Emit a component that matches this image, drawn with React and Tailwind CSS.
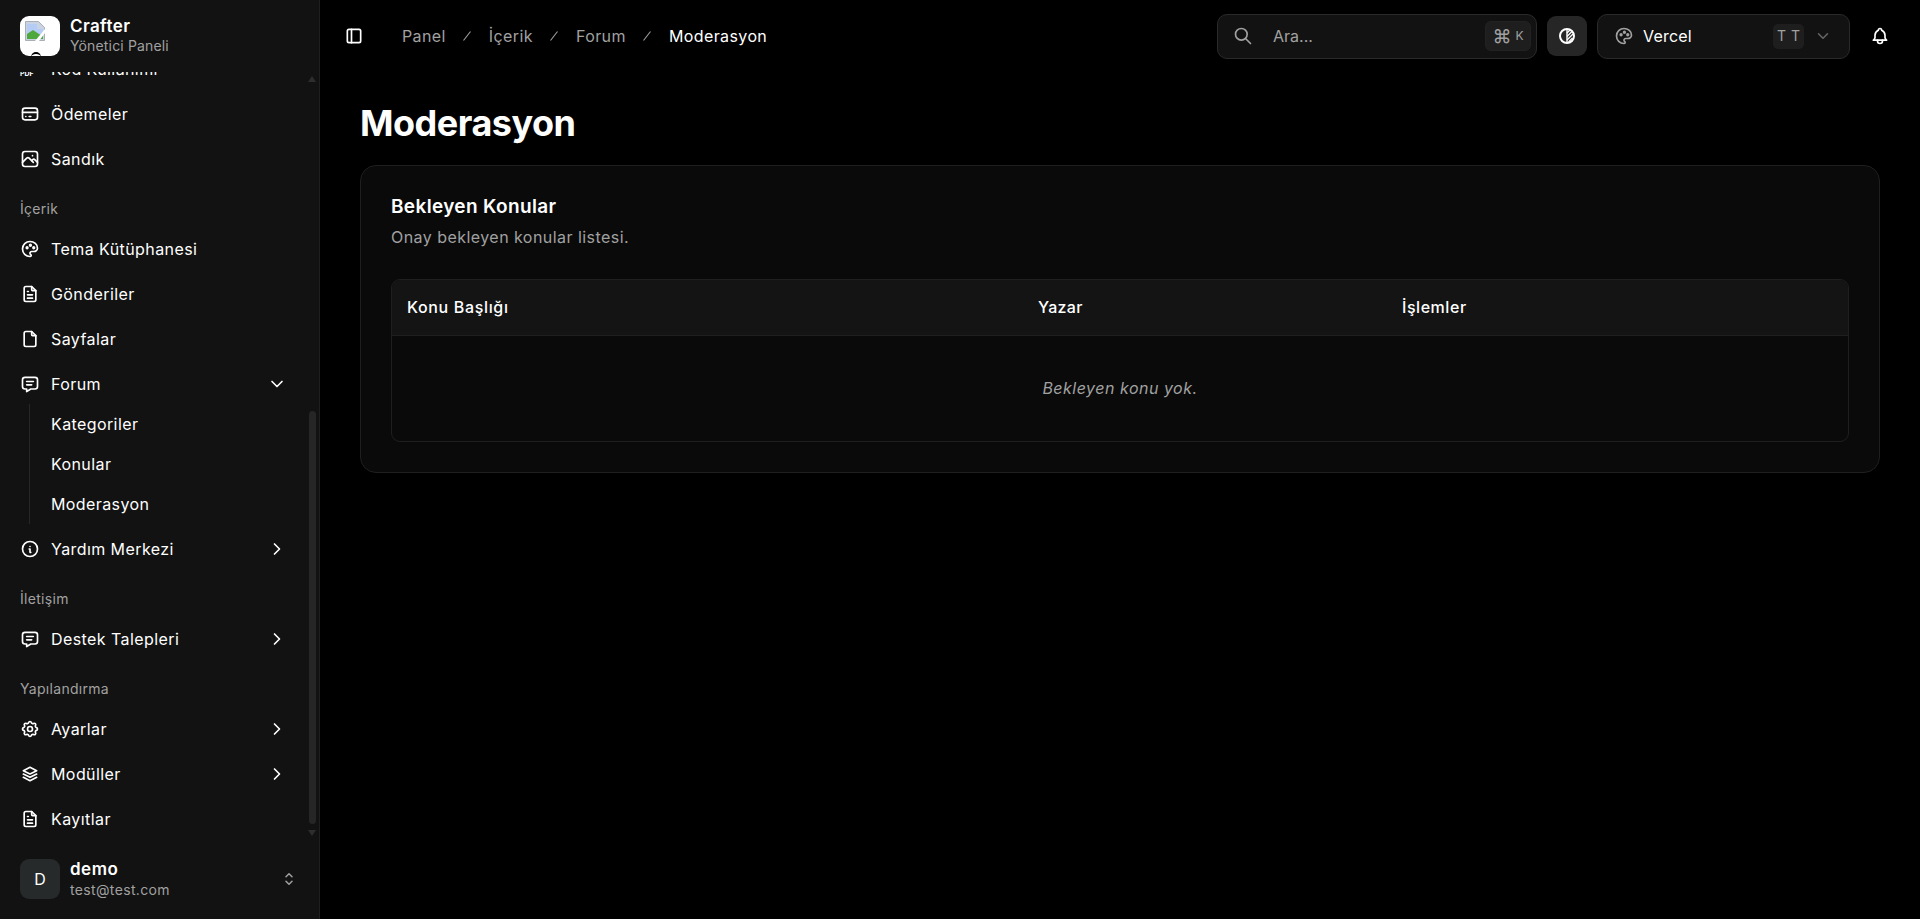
import React from 'react';
import {
  TbCreditCard, TbPhoto, TbPalette, TbFileText, TbFile, TbMessage, TbInfoCircle,
  TbSettings, TbStack2, TbChevronRight, TbChevronDown, TbSelector, TbLayoutSidebar,
  TbSearch, TbBell,
} from 'react-icons/tb';

const NavItem = ({ icon: Icon, label, arrow }) => (
  <div className="flex h-[45px] items-center pl-5 pr-[32px] text-white">
    <Icon className="mr-[11px] h-[20px] w-[20px] shrink-0" />
    <span className="flex-1 text-[16px] leading-none tracking-[0.42px]">{label}</span>
    {arrow === 'right' && <TbChevronRight className="h-[20px] w-[20px]" />}
    {arrow === 'down' && <TbChevronDown className="h-[20px] w-[20px]" />}
  </div>
);

const NavLabel = ({ children }) => (
  <div className="flex h-[45px] items-center pl-5 pt-[10px] text-[14px] leading-none tracking-[0.3px] text-[#a1a1a1]">
    {children}
  </div>
);

const SubItem = ({ children }) => (
  <div className="flex h-[40px] items-center text-[16px] leading-none tracking-[0.4px] text-white">{children}</div>
);

const ThemeIcon = () => (
  <svg viewBox="0 0 18 18" className="h-[18px] w-[18px]" fill="none" stroke="white" strokeWidth="2">
    <circle cx="9" cy="9" r="7" />
    <path d="M9 2v14" strokeWidth="1.4" />
    <path d="M9 6l3.5-3.5M9 9.5l5.5-5.5M9 13l6-6M10.5 15l4-4" strokeWidth="1.3" />
  </svg>
);

const Sidebar = () => (
  <aside className="relative flex h-[919px] w-[320px] shrink-0 flex-col border-r border-[#1f1f1f] bg-[#121212]">
    <div className="flex h-[72px] shrink-0 items-center gap-[10px] pl-5">
      <div className="relative h-10 w-10 overflow-hidden rounded-[9px] bg-white">
        <svg viewBox="0 0 20 20" className="absolute left-[5px] top-[5px] h-5 w-5">
          <path d="M0.5 0.5h13l6 6v13h-19z" fill="#c9d3e4" stroke="#9aa0a8" strokeWidth="0.8" />
          <path d="M2 3h10v5h6v5H2z" fill="#b5cdf5" />
          <path d="M2 18v-5l6-4 6 4 4 2v3z" fill="#4fa83d" />
          <path d="M10 20L20 8v4l-6 8z" fill="#ffffff" />
        </svg>
        <div className="absolute bottom-[-6px] left-[11px] h-[10px] w-[10px] rounded-full border-t-2 border-black" />
      </div>
      <div className="flex flex-col">
        <span className="text-[17px] font-semibold leading-[20px] tracking-[0.4px] text-white">Crafter</span>
        <span className="text-[14px] leading-[20px] tracking-[0.15px] text-[#a1a1a1]">Yönetici Paneli</span>
      </div>
    </div>

    <div className="relative flex-1 overflow-hidden">
      <div className="-mt-[26px]">
        <div className="flex h-[45px] items-center pl-5 text-white">
          <span className="w-[31px] pt-[10px] text-[7px] font-bold leading-none">PDF</span>
          <span className="text-[16px] leading-none tracking-[0.4px]">Kod Kullanımı</span>
        </div>
        <NavItem icon={TbCreditCard} label="Ödemeler" />
        <NavItem icon={TbPhoto} label="Sandık" />
        <NavLabel>İçerik</NavLabel>
        <NavItem icon={TbPalette} label="Tema Kütüphanesi" />
        <NavItem icon={TbFileText} label="Gönderiler" />
        <NavItem icon={TbFile} label="Sayfalar" />
        <NavItem icon={TbMessage} label="Forum" arrow="down" />
        <div className="-mt-[2px] mb-[2px] ml-[29px] border-l border-[#272727] pl-[21px]">
          <SubItem>Kategoriler</SubItem>
          <SubItem>Konular</SubItem>
          <SubItem>Moderasyon</SubItem>
        </div>
        <NavItem icon={TbInfoCircle} label="Yardım Merkezi" arrow="right" />
        <NavLabel>İletişim</NavLabel>
        <NavItem icon={TbMessage} label="Destek Talepleri" arrow="right" />
        <NavLabel>Yapılandırma</NavLabel>
        <NavItem icon={TbSettings} label="Ayarlar" arrow="right" />
        <NavItem icon={TbStack2} label="Modüller" arrow="right" />
        <NavItem icon={TbFileText} label="Kayıtlar" />
      </div>
      {/* scrollbar */}
      <div className="absolute right-[3px] top-0 bottom-0 flex w-[8px] flex-col items-center">
        <div className="mt-[4px] h-0 w-0 border-x-[4px] border-b-[6px] border-x-transparent border-b-[#2e2e2e]" />
        <div className="mt-[329px] h-[413px] w-[7px] rounded-full bg-[#262626]" />
        <div className="mt-[6px] h-0 w-0 border-x-[4px] border-t-[6px] border-x-transparent border-t-[#2e2e2e]" />
      </div>
    </div>

    <div className="flex h-[76px] shrink-0 items-center gap-[10px] pb-[4px] pl-5 pr-[21px]">
      <div className="flex h-10 w-10 items-center justify-center rounded-[9px] bg-[#272a2a] text-[16px] text-white">D</div>
      <div className="flex flex-1 flex-col">
        <span className="text-[17px] font-semibold leading-[21px] tracking-[0.5px] text-white">demo</span>
        <span className="text-[14px] leading-[20px] tracking-[0.35px] text-[#a1a1a1]">test@test.com</span>
      </div>
      <TbSelector className="h-[18px] w-[18px] text-[#a1a1a1]" />
    </div>
  </aside>
);

const Crumb = ({ children, last }) => (
  <>
    <span className={`text-[16px] leading-none tracking-[0.4px] ${last ? 'text-white' : 'text-[#a1a1a1]'}`}>{children}</span>
    {!last && (
      <svg viewBox="0 0 10 10" className="mx-[16.5px] h-[10px] w-[10px]" stroke="#a1a1a1" strokeWidth="1.1" fill="none">
        <path d="M1.5 9.5L8.5 0.5" />
      </svg>
    )}
  </>
);

const Header = () => (
  <header className="flex h-[72px] items-center pl-[24px] pr-[30px]">
    <TbLayoutSidebar className="h-[20px] w-[20px] text-white" />
    <nav className="ml-[38px] flex items-center">
      <Crumb>Panel</Crumb>
      <Crumb>İçerik</Crumb>
      <Crumb>Forum</Crumb>
      <Crumb last>Moderasyon</Crumb>
    </nav>
    <div className="ml-auto flex items-center">
      <div className="flex h-[45px] w-[320px] items-center rounded-[10px] border border-[#2a2a2a] bg-[#121212] pl-[15px] pr-[5px]">
        <TbSearch className="h-[20px] w-[20px] text-[#a1a1a1]" />
        <span className="ml-[20px] flex-1 text-[16px] leading-none text-[#a1a1a1]">Ara...</span>
        <div className="flex h-[30px] w-[46px] items-center justify-center gap-[4px] rounded-[6px] border border-[#222] bg-[#1e1e1e] text-[#a1a1a1]">
          <span className="text-[19px] leading-none">⌘</span>
          <span className="text-[12px] leading-none">K</span>
        </div>
      </div>
      <div className="ml-[10px] flex h-10 w-10 items-center justify-center rounded-[9px] bg-[#262626]">
        <ThemeIcon />
      </div>
      <div className="ml-[10px] flex h-[45px] w-[253px] items-center rounded-[10px] border border-[#2a2a2a] bg-[#121212] pl-[16px] pr-[17px]">
        <TbPalette className="h-[20px] w-[20px] text-[#a1a1a1]" />
        <span className="ml-[9px] flex-1 text-[16px] leading-none tracking-[0.2px] text-white">Vercel</span>
        <div className="flex h-[25px] w-[31px] items-center justify-center gap-[5px] rounded-[5px] bg-[#1e1e1e] text-[14px] leading-none text-[#a1a1a1]">
          <span>T</span>
          <span>T</span>
        </div>
        <TbChevronDown className="ml-[10px] h-[18px] w-[18px] text-[#666666]" />
      </div>
      <TbBell className="ml-[20px] h-[20px] w-[20px] text-white" />
    </div>
  </header>
);

const Main = () => (
  <main className="flex-1 pl-[40px] pr-[40px]">
    <h1 className="mt-[25px] h-[52px] text-[36px] font-bold leading-[52px] tracking-[-0.5px] text-white">Moderasyon</h1>
    <section className="mt-[16px] rounded-[16px] border border-[#1f1f1f] bg-[#0a0a0a] px-[30px] pb-[30px] pt-[29px]">
      <h2 className="text-[19px] font-semibold leading-[24px] tracking-[0.35px] text-white">Bekleyen Konular</h2>
      <p className="mt-[6px] text-[16px] leading-[24px] tracking-[0.45px] text-[#a1a1a1]">Onay bekleyen konular listesi.</p>
      <div className="mt-[30px] overflow-hidden rounded-[9px] border border-[#1f1f1f]">
        <table className="w-full table-fixed text-left">
          <thead>
            <tr className="h-[55px] border-b border-[#1f1f1f] bg-[#141414]">
              <th className="w-[646px] pl-[15px] text-[16px] font-medium tracking-[0.65px] text-white">Konu Başlığı</th>
              <th className="w-[364px] text-[16px] font-medium tracking-[0.3px] text-white">Yazar</th>
              <th className="text-[16px] font-medium tracking-[0.55px] text-white">İşlemler</th>
            </tr>
          </thead>
          <tbody>
            <tr className="h-[106px]">
              <td colSpan={3} className="text-center text-[16px] italic tracking-[0.5px] text-[#a1a1a1]">Bekleyen konu yok.</td>
            </tr>
          </tbody>
        </table>
      </div>
    </section>
  </main>
);

export default function App() {
  return (
    <div className="flex h-[919px] w-full overflow-hidden bg-black font-['Inter',sans-serif]">
      <Sidebar />
      <div className="flex min-w-0 flex-1 flex-col">
        <Header />
        <Main />
      </div>
    </div>
  );
}
